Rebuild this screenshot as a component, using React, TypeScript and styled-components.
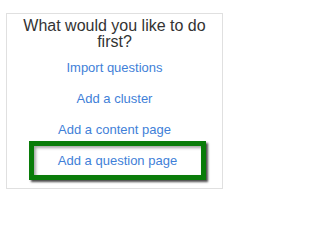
import React from 'react'
import styled, { createGlobalStyle } from 'styled-components'

const GlobalStyle = createGlobalStyle`
  body {
    margin: 0;
    background-color: #ffffff;
    font-family: 'Liberation Sans', Arial, sans-serif;
  }
`

const Card = styled.div`
  box-sizing: border-box;
  width: 217px;
  margin: 13px 0 0 6px;
  padding: 4px 0 8px;
  border: 1px solid #e0e0e0;
  display: flex;
  flex-direction: column;
`

const Title = styled.h2`
  margin: 0 0 10px;
  font-size: 16px;
  font-weight: 400;
  line-height: 16px;
  color: #333333;
  text-align: center;
`

const Option = styled.a<{ gap: number }>`
  display: block;
  margin-top: ${({ gap }) => gap}px;
  font-size: 13px;
  line-height: 16px;
  color: #3f7fd8;
  text-align: center;
  text-decoration: none;
  cursor: pointer;
`

const Highlight = styled.div`
  box-sizing: border-box;
  width: 177px;
  margin: 3px 0 0 22px;
  padding: 7px 0 6px;
  border: 5px solid #0a7c0a;
  box-shadow: 2px 2px 2px rgba(0, 0, 0, 0.7), inset 2px 2px 3px rgba(0, 0, 0, 0.35);
  display: flex;
  justify-content: center;
`

const options = [
  { text: 'Import questions', gap: 0 },
  { text: 'Add a cluster', gap: 15 },
  { text: 'Add a content page', gap: 15 },
]

const App: React.FC = () => {
  return (
    <>
      <GlobalStyle />
      <Card>
        <Title>
          What would you like to do
          <br />
          first?
        </Title>
        {options.map(({ text, gap }) => (
          <Option key={text} gap={gap}>
            {text}
          </Option>
        ))}
        <Highlight>
          <Option gap={0}>Add a question page</Option>
        </Highlight>
      </Card>
    </>
  )
}

export default App
